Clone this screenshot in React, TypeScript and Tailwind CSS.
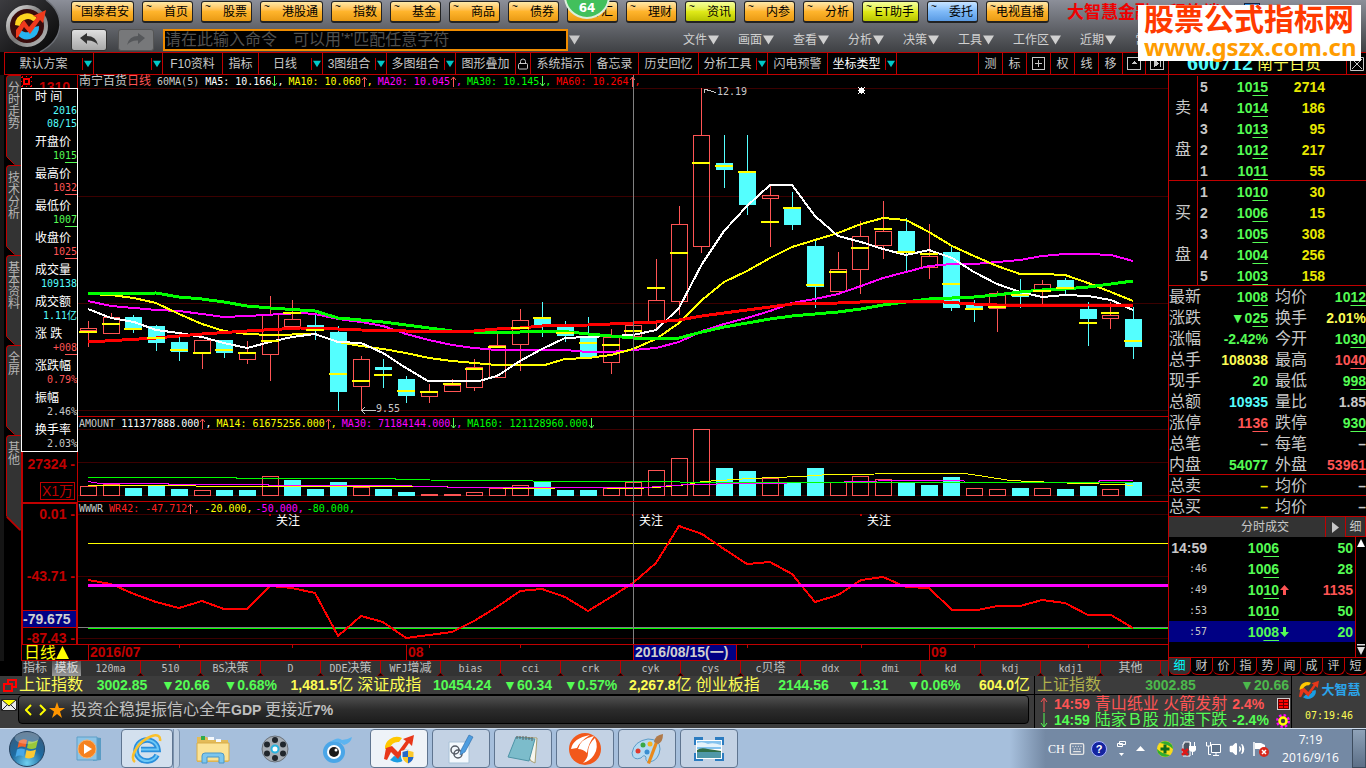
import React from 'react';
import { Keyboard, Lock, Volume2 } from 'lucide-react';

type Candle = [kind: 'u' | 'd', high: number, top: number, bottom: number, low: number, mark: number];

const START_X = 88;
const STEP_X = 22.72;
const CHART_LEFT = 78;
const CHART_WIDTH = 1090;

const barX = (i: number) => Math.round(START_X + i * STEP_X);
const leftPercent = (x: number) => `${((x - CHART_LEFT) / CHART_WIDTH) * 100}%`;

const candles: Candle[] = [
  ['u', 321, 328, 330, 347, 331], ['u', 313, 317, 333, 333, 323], ['d', 315, 317, 330, 333, 328],
  ['d', 325, 326, 343, 351, 337], ['d', 335, 342, 352, 361, 349], ['u', 340, 340, 353, 369, 352],
  ['d', 340, 340, 353, 358, 349], ['u', 341, 353, 359, 364, 352], ['u', 296, 314, 354, 381, 340],
  ['u', 300, 319, 326, 330, 312], ['d', 315, 325, 327, 340, 329], ['d', 326, 332, 392, 411, 373],
  ['u', 356, 359, 386, 411, 380], ['d', 359, 367, 370, 388, 374], ['d', 376, 379, 396, 403, 390],
  ['u', 384, 391, 396, 403, 391], ['u', 379, 385, 391, 391, 383], ['u', 359, 367, 387, 391, 368],
  ['u', 333, 345, 377, 377, 346], ['u', 309, 320, 344, 371, 327], ['d', 302, 317, 325, 337, 317],
  ['d', 321, 327, 336, 342, 332], ['d', 317, 336, 358, 358, 342], ['u', 329, 337, 362, 374, 344],
  ['u', 325, 325, 336, 336, 330], ['u', 259, 300, 321, 330, 287], ['u', 206, 224, 301, 315, 252],
  ['u', 88, 135, 246, 253, 162], ['d', 135, 163, 170, 188, 165], ['d', 135, 172, 205, 215, 171],
  ['u', 186, 195, 198, 247, 221], ['d', 192, 207, 225, 230, 207], ['d', 241, 246, 287, 308, 284],
  ['u', 252, 269, 291, 291, 271], ['u', 221, 236, 269, 294, 247], ['u', 201, 231, 245, 259, 228],
  ['d', 218, 231, 253, 271, 251], ['u', 224, 256, 267, 279, 253], ['d', 247, 252, 308, 311, 283],
  ['d', 300, 305, 310, 322, 308], ['u', 291, 293, 308, 332, 306], ['d', 279, 293, 297, 308, 294],
  ['u', 280, 284, 289, 304, 290], ['d', 278, 280, 289, 294, 287], ['d', 302, 309, 319, 346, 322],
  ['u', 302, 315, 318, 329, 312], ['d', 307, 319, 347, 359, 340],
];

// top edge of each turnover bar; all of them stand on y = 496
const volumes = [
  486, 484, 488, 486, 489, 490, 490, 490, 476, 480, 489, 482, 487, 489, 492, 494, 494, 492, 488, 485, 482, 490,
  490, 488, 482, 470, 458, 429, 468, 471, 478, 483, 468, 482, 476, 479, 483, 485, 477, 488, 489, 488, 488, 489,
  486, 489, 482,
];
const volumeKinds = 'uuddduddudd' + 'duddu' + 'uuuu' + 'ddduuuuu' + 'ddudd' + 'uuudddu' + 'ududdud';

const averages = [
  {
    color: '#ff00ff', width: 2,
    points: '88,301 111,306 134,308 156,310 179,311 202,314 224,317 247,316 300,313 315,314 338,319 361,322 383,326 406,334 429,340 452,345 474,348 497,350 565,350 588,352 611,352 633,350 656,348 679,342 702,331 724,324 747,318 770,311 792,303 815,299 838,294 861,286 883,278 906,272 929,266 952,264 974,264 997,262 1020,260 1042,256 1065,254 1088,254 1111,255 1133,261',
  },
  {
    color: '#ffff00', width: 2,
    points: '88,294 111,295 134,298 156,303 179,314 202,324 224,331 247,334 270,335 315,334 338,342 361,346 383,349 406,353 429,358 452,361 474,363 497,365 545,365 565,359 588,358 611,355 633,349 656,339 679,323 702,300 724,282 747,271 770,258 792,247 815,240 838,233 861,224 883,218 906,220 929,232 952,246 974,256 997,266 1020,274 1042,274 1065,275 1088,283 1111,292 1133,301',
  },
  {
    color: '#ffffff', width: 2,
    points: '88,309 111,318 134,322 156,330 179,333 202,337 224,343 247,348 270,342 292,337 315,334 338,342 361,343 383,353 406,368 428,381 479,381 497,376 520,361 542,349 565,338 588,337 633,335 656,330 679,308 702,264 724,231 747,206 770,185 792,185 815,216 838,236 861,242 883,249 906,255 929,250 952,258 974,272 997,284 1020,292 1042,297 1065,295 1088,296 1111,300 1133,310',
  },
  {
    color: '#00ff00', width: 3,
    points: '88,294 156,293 179,297 202,299 224,302 247,306 270,308 300,310 315,311 338,318 361,320 383,322 406,325 429,328 452,331 474,332 520,332 542,331 560,331 588,334 611,336 633,338 656,339 679,338 702,332 724,327 747,323 770,319 792,316 815,314 838,312 861,309 883,305 906,302 929,299 952,298 974,297 997,295 1020,292 1042,290 1065,289 1088,287 1111,284 1133,281',
  },
  {
    color: '#ff0000', width: 3,
    points: '88,342 156,338 202,334 247,331 300,328 338,329 361,330 406,331 474,331 497,329 520,328 542,326 588,325 633,323 656,322 679,320 702,316 724,313 747,310 770,307 792,304 838,303 883,301 929,301 974,304 997,305 1088,305 1133,306',
  },
];

const turnoverAverages = [
  {
    color: '#ffff00',
    points: '88,485.5 300,486.5 420,486.5 530,488.5 580,487.5 633,488.5 656,487.5 688,484.5 702,481.5 720,480.5 750,478.5 800,476.5 830,474.5 920,473.5 965,473.5 985,476.5 1010,480.5 1032,481.5 1078,483.5 1120,484.5 1133,485.5',
  },
  {
    color: '#ff00ff',
    points: '88,481.5 100,483.5 168,483.5 169,484.5 236,484.5 300,485.5 395,485.5 464,487.5 645,487.5 688,484.5 747,483.5 827,482.5 895,480.5 963,480.5 966,482.5 1098,482.5 1100,480.5 1133,480.5',
  },
  {
    color: '#00ff00',
    points: '88,477.5 236,477.5 237,478.5 395,478.5 396,479.5 464,480.5 600,481.5 760,482.5 1133,482.5',
  },
];

const wrPoints =
  '88,580 111,584 134,594 156,602 179,608 202,601 224,609 247,609 270,586 292,588 315,593 338,636 361,616 383,622 406,638 429,635 452,632 474,621 497,607 520,591 542,589 565,597 588,611 611,597 633,583 656,563 679,526 702,534 724,549 747,564 770,562 792,574 815,602 838,595 861,580 883,577 906,587 929,588 952,610 978,610 997,606 1020,606 1042,600 1065,603 1088,615 1111,615 1133,628';

const GOLD = 'from-[#ffe9a8] via-[#ffb52c] to-[#e99a12]';
const LIME = 'from-[#f6ff9a] via-[#e0ea18] to-[#b8c400]';
const SKY = 'from-[#c8e4ff] via-[#7fbaf8] to-[#5a9be4]';

const shortcuts = [
  { label: '国泰君安', w: 'w-[63px]', tone: GOLD },
  { label: '首页', w: 'w-[51px]', tone: GOLD },
  { label: '股票', w: 'w-[51px]', tone: GOLD },
  { label: '港股通', w: 'w-[63px]', tone: GOLD },
  { label: '指数', w: 'w-[51px]', tone: GOLD },
  { label: '基金', w: 'w-[51px]', tone: GOLD },
  { label: '商品', w: 'w-[51px]', tone: GOLD },
  { label: '债券', w: 'w-[51px]', tone: GOLD },
  { label: '外汇', w: 'w-[51px]', tone: GOLD },
  { label: '理财', w: 'w-[51px]', tone: GOLD },
  { label: '资讯', w: 'w-[51px]', tone: LIME },
  { label: '内参', w: 'w-[51px]', tone: GOLD },
  { label: '分析', w: 'w-[51px]', tone: GOLD },
  { label: 'ET助手', w: 'w-[57px]', tone: LIME },
  { label: '委托', w: 'w-[51px]', tone: SKY },
  { label: '电视直播', w: 'w-[63px]', tone: GOLD },
];

const menus = ['文件', '画面', '查看', '分析', '决策', '工具', '工作区', '近期', '常用'];

const tools = [
  { label: '默认方案', w: 'w-[89px]', drop: true },
  { label: '', w: 'w-[69px]', drop: true },
  { label: 'F10资料', w: 'w-[60px]' },
  { label: '指标', w: 'w-[36px]' },
  { label: '日线', w: 'w-[64px]', drop: true },
  { label: '3图组合', w: 'w-[64px]', drop: true },
  { label: '多图组合', w: 'w-[69px]', drop: true },
  { label: '图形叠加', w: 'w-[60px]' },
  { label: 'lock', w: 'w-[15px]' },
  { label: '系统指示', w: 'w-[60px]' },
  { label: '备忘录', w: 'w-[48px]' },
  { label: '历史回忆', w: 'w-[60px]' },
  { label: '分析工具', w: 'w-[69px]', drop: true },
  { label: '闪电预警', w: 'w-[60px]' },
  { label: '坐标类型', w: 'w-[69px]', drop: true, active: true },
];

const sideTabs = ['分时走势', '技术分析', '基本资料', '全屏', '其他'];

const templates = [
  '120ma', '510', 'BS决策', 'D', 'DDE决策', 'WFJ增减', 'bias', 'cci', 'crk', 'cyk', 'cys', 'c贝塔', 'ddx', 'dmi',
  'kd', 'kdj', 'kdj1', '其他',
];

const G = 'text-[#54fc54]';
const R = 'text-[#ff5454]';
const Y = 'text-[#fcfc54]';
const C = 'text-[#54fcfc]';
const W = 'text-[#c8c8c8]';

const dayInfo = [
  { label: '时 间', values: ['2016', '08/15'], color: C },
  { label: '开盘价', values: ['1015'], color: G, price: true },
  { label: '最高价', values: ['1032'], color: R, price: true },
  { label: '最低价', values: ['1007'], color: G, price: true },
  { label: '收盘价', values: ['1025'], color: R, price: true },
  { label: '成交量', values: ['109138'], color: C },
  { label: '成交额', values: ['1.11亿'], color: C },
  { label: '涨 跌', values: ['+008'], color: R, price: true },
  { label: '涨跌幅', values: ['0.79%'], color: R },
  { label: '振幅', values: ['2.46%'], color: W },
  { label: '换手率', values: ['2.03%'], color: W },
];

const asks = [['5', '1015', '2714'], ['4', '1014', '186'], ['3', '1013', '95'], ['2', '1012', '217'], ['1', '1011', '55']];
const bids = [['1', '1010', '30'], ['2', '1006', '15'], ['3', '1005', '308'], ['4', '1004', '256'], ['5', '1003', '158']];

type Stat = [string, string, string, string, string, string];
const stats: Stat[] = [
  ['最新', '_1008', G, '均价', '_1012', G],
  ['涨跌', '▼_025', G, '换手', '2.01%', Y],
  ['涨幅', '-2.42%', G, '今开', '_1030', G],
  ['总手', '108038', Y, '最高', '_1040', R],
  ['现手', '20', G, '最低', '_998', G],
  ['总额', '10935', C, '量比', '1.85', W],
  ['涨停', '_1136', R, '跌停', '_930', G],
  ['总笔', '–', W, '每笔', '–', W],
  ['内盘', '54077', G, '外盘', '53961', R],
  ['总卖', '–', 'text-[#e8e800]', '均价', '–', W],
  ['总买', '–', 'text-[#e8e800]', '均价', '–', W],
];

const trades = [
  { time: '14:59', price: '1006', arrow: '', vol: '50', color: G },
  { time: ':46', price: '1006', arrow: '', vol: '28', color: G },
  { time: ':49', price: '1010', arrow: 'up', vol: '1135', color: R },
  { time: ':53', price: '1010', arrow: '', vol: '50', color: G },
  { time: ':57', price: '1008', arrow: 'down', vol: '20', color: G },
];

const quoteTabs = ['细', '财', '价', '指', '势', '闻', '成', '评', '短'];

const indices = [
  { name: '上证指数', price: '3002.85', change: '▼20.66', percent: '▼0.68%', amount: '1,481.5亿' },
  { name: '深证成指', price: '10454.24', change: '▼60.34', percent: '▼0.57%', amount: '2,267.8亿' },
  { name: '创业板指', price: '2144.56', change: '▼1.31', percent: '▼0.06%', amount: '604.0亿' },
];

const mono = "font-['DejaVu_Sans_Mono','Noto_Sans_CJK_SC',monospace] text-[10px]";

// The last two digits of a price (after an optional "_" marker) are underlined
const Price = ({ value }: { value: string }) => {
  if (!value.includes('_')) return <>{value}</>;
  const text = value.replace('_', '');
  return (
    <>
      {text.slice(0, -2)}
      <span className="underline decoration-1 underline-offset-3">{text.slice(-2)}</span>
    </>
  );
};

const DownTriangle = ({ className }: { className: string }) => (
  <svg viewBox="0 0 12 10" className={className}>
    <path d="M0 0H12L6 10Z" fill="currentColor" />
  </svg>
);

const AppLogo = () => (
  <svg viewBox="0 0 60 52" className="h-[52px] w-[60px] shrink-0">
    <defs>
      <linearGradient id="ring" x1="0" y1="0" x2="1" y2="1">
        <stop offset="0" stopColor="#e8e8e8" />
        <stop offset="0.5" stopColor="#777" />
        <stop offset="1" stopColor="#bdbdbd" />
      </linearGradient>
      <linearGradient id="corner" x1="0" y1="0" x2="1" y2="1">
        <stop offset="0" stopColor="#3c3c40" />
        <stop offset="1" stopColor="#050505" />
      </linearGradient>
    </defs>
    <path d="M0 0H46Q60 10 60 25Q59 42 40 52H0Z" fill="url(#corner)" />
    <path d="M46 0Q60 10 60 25Q59 42 40 52" fill="none" stroke="#6d7077" strokeWidth="1.5" />
    <circle cx="27" cy="26" r="19" fill="#3a0c0c" stroke="url(#ring)" strokeWidth="4" />
    <path d="M15 25A12 11 0 0 1 38 20L33 21A8 8 0 0 0 20 26Z" fill="#ffd21f" />
    <path d="M39 26A12 12 0 0 1 16 32L21 30A8 8 0 0 0 34 27Z" fill="#27b4f0" />
    <path d="M16 38L16 30L24 20L29 27L37 17L33 16L46 10L43 23L40 20L30 34L24 27L18 37Z" fill="#ef3a1c" />
  </svg>
);

const HistoryArrow = ({ className, flip }: { className: string; flip?: boolean }) => (
  <svg viewBox="0 0 20 14" className={`h-[14px] w-5 ${className}`}>
    <path
      d={flip ? 'M19 5L12 0V3Q3 3 1 12Q5 7 12 7.500V11Z' : 'M1 5L8 0V3Q17 3 19 12Q15 7 8 7.500V11Z'}
      fill="currentColor"
    />
  </svg>
);

const Header = () => (
  <header className="relative flex h-[52px] shrink-0 bg-linear-to-b from-[#8c8f99] to-[#3f4144]">
    <AppLogo />
    <div className="flex min-w-0 flex-1 flex-col pl-[11px]">
      <nav className="flex gap-2 pt-px text-xs">
        {shortcuts.map((item) => (
          <button
            key={item.label}
            className={`relative flex h-[22px] shrink-0 items-center justify-end rounded-[3px] border border-b-2 border-[#222] bg-linear-to-b pr-1 leading-3 text-black ${item.w} ${item.tone}`}
          >
            <span className="absolute top-0 left-[3px] text-[10px] leading-[10px]">~</span>
            {item.label}
          </button>
        ))}
        <span className="ml-2.5 text-[17px] leading-6 font-bold whitespace-nowrap text-[#f00000]">
          大智慧金融工程终端
        </span>
        <span className="mt-0.5 ml-4 h-3 w-4 border border-[#124] bg-[#2f8fe0]" />
      </nav>
      <div className="flex items-center pt-1">
        <button
          aria-label="后退"
          className="flex h-[22px] w-9 items-center justify-center rounded-[3px] border border-[#333] bg-linear-to-b from-[#e0e0e0] to-[#a8a8a8]"
        >
          <HistoryArrow className="text-[#333]" />
        </button>
        <button
          aria-label="前进"
          className="ml-[11px] flex h-[22px] w-9 items-center justify-center rounded-[3px] border border-[#555] bg-[#77787a]"
        >
          <HistoryArrow className="text-[#55575a]" flip />
        </button>
        <input
          aria-label="命令"
          placeholder="请在此输入命令　可以用'*'匹配任意字符"
          className="ml-[9px] h-[22px] w-[405px] border-2 border-[#f08c00] bg-black text-base leading-4 text-white outline-none placeholder:text-[#505050]"
        />
        <DownTriangle className="ml-px h-2.5 w-[11px] text-[#c8c8c8]" />
        <nav className="ml-[103px] flex gap-[19px] text-xs leading-4 text-[#d0d0d0]">
          {menus.map((label) => (
            <button key={label} className="flex shrink-0 items-center">
              {label}
              <DownTriangle className="ml-px h-2.5 w-[11px]" />
            </button>
          ))}
        </nav>
      </div>
    </div>

    {/* download speed ball, half hidden behind the top edge */}
    <div className="absolute -top-[27px] left-[564px] flex h-[46px] w-[46px] items-end justify-center rounded-full border-2 border-[#dcefdc] bg-[#42c05c] pb-px font-['DejaVu_Sans'] text-xs leading-4 font-bold text-white">
      64
    </div>
    <div className="absolute top-[5px] right-[5px] z-20 w-[223px] bg-white pb-0.5 pl-[6px]">
      <p className="text-[30px] leading-[30px] font-bold whitespace-nowrap text-[#ff3a00]">股票公式指标网</p>
      <p className="font-['Noto_Sans',sans-serif] text-2xl leading-6 font-bold text-[#ff9c00]">www.gszx.com.cn</p>
    </div>
  </header>
);

const PlusBox = () => (
  <svg viewBox="0 0 13 13" className="h-[13px] w-[13px]" fill="none" stroke="#c8c8c8" shapeRendering="crispEdges">
    <path d="M0.500 0.500H12.500V12.500H0.500ZM6.500 3V10M3 6.500H10" />
  </svg>
);

const Toolbar = () => (
  <div className="ml-1 flex h-[23px] border-y border-l border-[#c00000] text-xs text-[#c8c8c8]">
    {tools.map((tool, i) => (
      <button key={i} className={`flex shrink-0 items-center border-r border-[#c00000] ${tool.w}`}>
        <span className={`flex-1 text-center whitespace-nowrap ${tool.active ? 'text-white' : ''}`}>
          {tool.label === 'lock' ? <Lock className="mx-auto h-3.5 w-3" /> : tool.label}
        </span>
        {tool.drop && (
          <span className="flex h-3 w-[11px] items-center justify-center border-l border-[#c00000]">
            <DownTriangle className="h-2 w-2 text-[#00c8c8]" />
          </span>
        )}
      </button>
    ))}
    <div className="flex flex-1 justify-end">
      {['测', '标', '+', '权', '线', '移', 'up', 'next'].map((label) => (
        <button
          key={label}
          aria-label={label}
          className={`flex items-center justify-center border-l border-[#c00000] ${label.length > 1 ? 'w-[23px]' : 'w-6'}`}
        >
          {label === '+' && <PlusBox />}
          {label === 'up' && (
            <svg viewBox="0 0 14 13" className="h-[13px] w-[14px]" stroke="#c8c8c8" fill="none" shapeRendering="crispEdges">
              <path d="M0.500 0.500H13.500V12.500H0.500Z" />
              <path d="M4 7H10L7 4Z" fill="#c8c8c8" stroke="none" />
            </svg>
          )}
          {label === 'next' && (
            <svg viewBox="0 0 14 13" className="h-[13px] w-[14px]" stroke="#c8c8c8" fill="none" shapeRendering="crispEdges">
              <path d="M0.500 0.500H13.500V12.500H0.500ZM10.500 3V10" />
              <path d="M4 2.500V10.500L9 6.500Z" fill="#c8c8c8" stroke="none" />
            </svg>
          )}
          {label.length === 1 && label !== '+' && label}
        </button>
      ))}
    </div>
  </div>
);

const SideTabs = () => (
  <div className="flex w-[21px] shrink-0 flex-col border-l-4 border-[#151515] pl-0.5">
    {sideTabs.map((label, i) => {
      const last = i === sideTabs.length - 1;
      return (
        <button
          key={label}
          className={`relative flex items-start rounded-tl-sm border-t border-l border-[#c00000] bg-[#333] pt-1.5 pl-px ${
            last ? 'h-24' : 'h-[90px]'
          }`}
        >
          <span className="w-3 text-xs leading-3 break-all text-[#b4b4b4]">{label}</span>
          <svg
            viewBox="0 0 9 9"
            className={`absolute bottom-0 -left-px ${last ? 'h-[15px] w-[15px]' : 'h-[9px] w-[9px]'}`}
          >
            <path d="M0 0V9H9Z" fill="#000" />
            <path d="M0.500 0.500L8.500 8.500" stroke="#c00000" />
          </svg>
        </button>
      );
    })}
  </div>
);

const Axis = () => (
  <div className="relative flex w-[57px] shrink-0 flex-col text-sm leading-4 font-bold text-[#c00000]">
    <div className="flex min-h-[342px] flex-1 items-start border-r border-[#c00000]">
      <svg viewBox="0 0 11 11" className="mt-px h-[11px] w-[11px]" fill="none" stroke="#f00" shapeRendering="crispEdges">
        <path d="M3 3H8V8H3Z" strokeWidth="2" />
        <path d="M1 0V2M0 1H2M5.500 0V1M10 0V2M9 1H11M1 9V11M0 10H2M5.500 10V11M10 9V11M9 10H11M0 5.500H1M10 5.500H11" />
      </svg>
      <span className="h-[13px] overflow-hidden pt-1 pl-[7px]">1310</span>
    </div>
    <div className="flex h-[85px] flex-col items-end justify-end border-r border-l-2 border-[#c00000] pb-0.5">
      <span className="pr-0.5">27324 -</span>
      <span className="mt-2.5 mr-0.5 border border-[#c00000] px-px leading-4 font-normal">X1万</span>
    </div>
    <div className="relative flex h-[143px] flex-col items-end justify-between border-2 border-b border-[#c00000]">
      <span className="mt-0.5 pr-px">0.01 -</span>
      <span className="mt-[46px] pr-px">-43.71 -</span>
      <div className="w-full">
        <div className="mt-[26px] w-full border-y border-[#c00000] bg-[#000084] text-[#d0d0d0]">-79.675</div>
        <div className="h-4 overflow-hidden pr-px text-right leading-5">-87.43 -</div>
      </div>
    </div>
    <button className="flex h-4 items-center border-b border-l border-[#c00000] pl-0.5 text-base leading-[14px] font-normal text-[#ffff00]">
      日线
      <svg viewBox="0 0 13 13" className="h-[13px] w-[13px]">
        <path d="M6.500 0L13 13H0Z" fill="currentColor" />
      </svg>
    </button>

    {/* values of the day under the crosshair, floats over the axis */}
    <dl className="absolute top-[13px] left-0 z-10 flex w-[57px] flex-col gap-[5px] border border-white bg-black pt-px pb-px font-normal">
      {dayInfo.map((row) => (
        <div key={row.label}>
          <dt className="pl-[13px] text-xs leading-[14px] whitespace-pre text-white">{row.label}</dt>
          {row.values.map((value) => (
            <dd key={value} className={`text-right leading-[13px] ${mono} ${row.color}`}>
              <Price value={row.price ? `_${value}` : value} />
            </dd>
          ))}
        </div>
      ))}
    </dl>
  </div>
);

type LegendItem = { text: string; color: string; trend?: 'up' | 'down' };

const TrendArrow = ({ trend }: { trend: 'up' | 'down' }) => (
  <svg
    viewBox="0 0 6 12"
    className={`mt-px inline-block h-3 w-1.5 align-top ${trend === 'up' ? R : G}`}
    fill="none"
    stroke="currentColor"
  >
    <path d={trend === 'up' ? 'M3.500 11V1M1 4L3.500 1L6 4' : 'M3.500 0V10M1 7L3.500 10L6 7'} />
  </svg>
);

const Legend = ({ items }: { items: LegendItem[] }) => (
  <>
    {items.map((item) => (
      <span key={item.text} className={`${item.trend ? 'mr-[5px]' : 'mr-[3px]'} ${item.color}`}>
        {item.text}
        {item.trend && <TrendArrow trend={item.trend} />},
      </span>
    ))}
  </>
);

const GridLines = ({ ys }: { ys: number[] }) => (
  <g fill="#3c0000">
    {ys.map((y) => (
      <rect key={y} x={CHART_LEFT} y={y} width={CHART_WIDTH} height="1" />
    ))}
  </g>
);

const PriceChart = () => (
  <div className="relative min-h-[342px] flex-1 border-b border-[#c00000]">
    <svg
      viewBox="78 75 1090 341"
      preserveAspectRatio="none"
      className="absolute inset-0 h-full w-full"
      shapeRendering="crispEdges"
    >
      <GridLines ys={[88, 196, 303, 410]} />
      {candles.map(([kind, high, top, bottom, low], i) => {
        const x = barX(i);
        return kind === 'd' ? (
          <g key={i} fill="#54ffff">
            <rect x={x} y={high} width="1" height={low - high} />
            <rect x={x - 8} y={top} width="17" height={bottom - top} />
          </g>
        ) : (
          <g key={i} fill="#ff5454">
            <rect x={x} y={high} width="1" height={top - high} />
            <rect x={x} y={bottom} width="1" height={low - bottom} />
            <rect x={x - 7.5} y={top + 0.5} width="16" height={bottom - top} fill="none" stroke="#ff5454" />
          </g>
        );
      })}
      {averages.map((line) => (
        <polyline key={line.color} points={line.points} fill="none" stroke={line.color} strokeWidth={line.width} />
      ))}
      {candles.map((candle, i) => (
        <rect key={i} x={barX(i) - 9} y={candle[5]} width="18" height="2" fill="#ffff00" />
      ))}
      <path d="M704 93V89L708 90M704 89L716 92.500M361 410.500H376M365 407L361.500 410.500L365 414" fill="none" stroke="#c8c8c8" />
      <path
        d="M859 88H864V93H859ZM858 87H859V88H858ZM861 87H862V88H861ZM864 87H865V88H864ZM858 90H859V91H858ZM864 90H865V91H864ZM858 93H859V94H858ZM861 93H862V94H861ZM864 93H865V94H864Z"
        fill="#fff"
      />
      <rect x="633" y="75" width="1" height="341" fill="#808080" />
    </svg>
    <div className={`relative flex items-start leading-[13px] whitespace-pre ${mono}`}>
      <span className="pl-px text-xs leading-[13px] text-[#c8c8c8]">南宁百货</span>
      <span className={`mr-1.5 text-xs leading-[13px] ${R}`}>日线</span>
      <span className="mr-1.5 text-[#c8c8c8]">60MA(5)</span>
      <Legend
        items={[
          { text: 'MA5: 10.166', color: 'text-white', trend: 'down' },
          { text: 'MA10: 10.060', color: 'text-[#ffff00]', trend: 'up' },
          { text: 'MA20: 10.045', color: 'text-[#ff00ff]', trend: 'up' },
          { text: 'MA30: 10.145', color: 'text-[#00ff00]', trend: 'down' },
          { text: 'MA60: 10.264', color: 'text-[#ff0000]', trend: 'up' },
        ]}
      />
    </div>
    <span className={`absolute top-[11px] leading-3 text-[#c8c8c8] ${mono}`} style={{ left: leftPercent(717) }}>
      12.19
    </span>
    <span className={`absolute bottom-px leading-3 text-[#c8c8c8] ${mono}`} style={{ left: leftPercent(376) }}>
      9.55
    </span>
  </div>
);

const TurnoverChart = () => (
  <div className="relative h-[85px] border-b border-[#c00000]">
    <svg
      viewBox="78 417 1090 84"
      preserveAspectRatio="none"
      className="absolute inset-0 h-full w-full"
      shapeRendering="crispEdges"
    >
      <GridLines ys={[429, 462, 495]} />
      {volumes.map((top, i) =>
        volumeKinds[i] === 'd' ? (
          <rect key={i} x={barX(i) - 8} y={top} width="17" height={496 - top} fill="#54ffff" />
        ) : (
          <rect key={i} x={barX(i) - 7.5} y={top + 0.5} width="16" height={495 - top} fill="none" stroke="#ff5454" />
        )
      )}
      {turnoverAverages.map((line) => (
        <polyline key={line.color} points={line.points} fill="none" stroke={line.color} />
      ))}
      <rect x="633" y="417" width="1" height="84" fill="#808080" />
    </svg>
    <div className={`relative flex items-start pl-px leading-[13px] whitespace-pre ${mono}`}>
      <span className="mr-1.5 text-[#c8c8c8]">AMOUNT</span>
      <Legend
        items={[
          { text: '111377888.000', color: 'text-white', trend: 'up' },
          { text: 'MA14: 61675256.000', color: 'text-[#ffff00]', trend: 'up' },
          { text: 'MA30: 71184144.000', color: 'text-[#ff00ff]', trend: 'down' },
        ]}
      />
      <span className="text-[#00ff00]">
        MA160: 121128960.000
        <TrendArrow trend="down" />
      </span>
    </div>
  </div>
);

const WrChart = () => (
  <div className="relative h-[143px] border-b border-[#c00000]">
    <svg
      viewBox="78 502 1090 142"
      preserveAspectRatio="none"
      className="absolute inset-0 h-full w-full"
      shapeRendering="crispEdges"
    >
      <GridLines ys={[514, 576, 638]} />
      <rect x="88" y="543" width="1080" height="1" fill="#ffff00" />
      <rect x="88" y="628" width="1080" height="1" fill="#00ff00" />
      <rect x="78" y="627" width="1090" height="1" fill="#808080" />
      <polyline points={wrPoints} fill="none" stroke="#ff0000" strokeWidth="2" />
      <rect x="88" y="584" width="1080" height="3" fill="#ff00ff" />
      <path d="M269 514H271V516H269ZM632 514H634V516H632ZM860 514H862V516H860Z" fill="#c00000" />
      <rect x="633" y="502" width="1" height="142" fill="#808080" />
    </svg>
    <div className={`relative flex items-start pl-px leading-[13px] whitespace-pre ${mono}`}>
      <span className="mr-1.5 text-[#c8c8c8]">WWWR</span>
      <Legend
        items={[
          { text: 'WR42: -47.712', color: 'text-[#ff2020]', trend: 'up' },
          { text: '-20.000', color: 'text-[#ffff00]' },
          { text: '-50.000', color: 'text-[#ff00ff]' },
          { text: '-80.000', color: 'text-[#00ff00]' },
        ]}
      />
    </div>
    {[276, 639, 867].map((x) => (
      <span key={x} className="absolute top-3 text-xs leading-[14px] text-white" style={{ left: leftPercent(x) }}>
        关注
      </span>
    ))}
  </div>
);

const DateAxis = () => (
  <div className="relative h-4 border-b border-[#c00000] text-sm leading-[15px] font-bold text-[#c00000]">
    {[179, 292, 429, 520, 747, 861, 974, 1088].map((x) => (
      <span key={x} className="absolute top-0 h-[3px] w-px bg-[#c00000]" style={{ left: leftPercent(x) }} />
    ))}
    {[{ x: 88, label: '2016/07' }, { x: 406, label: '08' }, { x: 929, label: '09' }].map(({ x, label }) => (
      <span key={x} className="absolute top-0 border-l border-[#c00000] pl-px" style={{ left: leftPercent(x) }}>
        {label}
      </span>
    ))}
    <span
      className="absolute top-0 h-[15px] w-[104px] overflow-hidden border-x border-[#c00000] bg-[#000084] pl-px whitespace-nowrap text-[#d0d0d0]"
      style={{ left: leftPercent(633) }}
    >
      2016/08/15(一)
    </span>
  </div>
);

const TemplateTabs = () => (
  <div className={`ml-[22px] flex h-[15px] bg-[#333] leading-[15px] text-[#c0c0c0] ${mono}`}>
    <button className="w-[30px] pr-1 text-xs leading-[15px]">指标</button>
    <button className="w-[29px] bg-linear-to-b from-[#555] to-[#999] text-xs leading-[15px] text-[#ddd]">模板</button>
    {templates.map((label) => (
      <button key={label} className="relative min-w-0 flex-1 border-r border-[#c00000] whitespace-nowrap">
        {label.split(/([\u4e00-\u9fff]+)/).map((part, i) => (
          <span key={i} className={i % 2 ? 'text-xs leading-[15px]' : ''}>
            {part}
          </span>
        ))}
        <svg viewBox="0 0 7 3" className="absolute -right-1 bottom-0 z-10 h-[3px] w-[7px]">
          <path d="M0 3L3.500 0L7 3Z" fill="#000" stroke="#c00000" strokeWidth="0.600" />
        </svg>
      </button>
    ))}
    <span className="w-[7px]" />
  </div>
);

const OrderBook = ({ side, rows }: { side: string; rows: string[][] }) => (
  <div className="flex h-[105px] shrink-0 shadow-[inset_0_-1px_#c00000]">
    <div className="flex w-[29px] flex-col items-center justify-center gap-[26px] border-r border-[#c00000] text-base leading-4">
      <span>{side}</span>
      <span>盘</span>
    </div>
    <table className="table-fixed border-collapse text-right text-sm leading-4 font-bold">
      <tbody>
        {rows.map(([level, price, volume]) => (
          <tr key={level} className="h-[21px]">
            <td className="w-[14px] p-0 pl-0.5 text-left">{level}</td>
            <td className={`w-[56px] p-0 ${G}`}>
              <Price value={`_${price}`} />
            </td>
            <td className="w-[57px] p-0 text-[#e8e800]">{volume}</td>
          </tr>
        ))}
      </tbody>
    </table>
  </div>
);

const QuotePanel = () => (
  <aside className="flex w-[198px] shrink-0 flex-col overflow-hidden border-l border-[#c00000] text-[#c8c8c8]">
    <div className="flex h-[23px] shrink-0 items-end border-y border-[#c00000] pl-[18px]">
      <span className="font-['Liberation_Serif'] text-[22px] leading-[22px] font-bold text-[#54fcfc]">600712</span>
      <span className="ml-1 flex-1 text-base leading-5 text-[#fcfc54]">南宁百货</span>
      <button aria-label="关闭" className="flex h-full w-5 items-center justify-center border-l border-[#c00000]">
        <svg viewBox="0 0 14 14" className="h-[14px] w-[14px]" fill="none" stroke="#c8c8c8">
          <path d="M0.500 0.500H13.500V13.500H0.500ZM2 2L12 12M12 2L2 12" />
        </svg>
      </button>
    </div>
    <div className="pt-px">
      <OrderBook side="卖" rows={asks} />
      <OrderBook side="买" rows={bids} />
    </div>
    <table className="w-full table-fixed border-collapse text-sm leading-4">
      <tbody>
        {stats.map(([label, value, color, label2, value2, color2], i) => (
          <tr key={label} className={i > 7 ? 'h-[21px] shadow-[inset_0_-1px_#c00000]' : 'h-[21px]'}>
            <th className="w-[36px] p-0 text-left text-base leading-4 font-normal">{label}</th>
            <td className={`w-[63px] p-0 text-right font-bold ${color}`}>
              <Price value={value} />
            </td>
            <th className="w-[40px] p-0 pl-[7px] text-left text-base leading-4 font-normal">{label2}</th>
            <td className={`w-[58px] p-0 text-right font-bold ${color2}`}>
              <Price value={value2} />
            </td>
          </tr>
        ))}
      </tbody>
    </table>
    <div className="flex h-5 shrink-0 bg-[#333] text-xs">
      <span className="flex-1 pl-9 text-center leading-5">分时成交</span>
      <button aria-label="更多" className="flex w-5 items-center justify-center border-l border-[#c00000]">
        <svg viewBox="0 0 7 11" className="h-[11px] w-[7px]">
          <path d="M0 0L7 5.500L0 11Z" fill="#c8c8c8" />
        </svg>
      </button>
      <button className="w-[21px] border border-t-0 border-[#c00000]">细</button>
    </div>
    <div className="flex flex-1">
      <div className="flex-1">
        <table className="w-full table-fixed border-collapse text-right text-sm leading-4 font-bold">
          <tbody>
            {trades.map((row, i) => (
              <tr key={i} className={i === 4 ? 'h-[21px] bg-[#000084]' : 'h-[21px]'}>
                <td className={i ? `w-[38px] p-0 font-normal ${mono}` : 'w-[38px] p-0'}>{row.time}</td>
                <td className={`w-[72px] p-0 ${G}`}>
                  <Price value={`_${row.price}`} />
                </td>
                <td className={`w-[11px] p-0 ${row.arrow === 'up' ? R : G}`}>
                  {row.arrow && (
                    <svg viewBox="0 0 9 10" className="mx-auto h-2.5 w-[9px]" fill="currentColor">
                      <path d={row.arrow === 'up' ? 'M4.500 0L9 5H6V10H3V5H0Z' : 'M4.500 10L0 5H3V0H6V5H9Z'} />
                    </svg>
                  )}
                </td>
                <td className={`p-0 pr-0.5 ${row.color}`}>{row.vol}</td>
              </tr>
            ))}
          </tbody>
        </table>
      </div>
      <div className="flex w-[11px] flex-col items-center justify-between border-l border-[#c00000] py-0.5">
        <svg viewBox="0 0 8 8" className="h-2 w-2">
          <path d="M0 8L4 0L8 8Z" fill="#fff" />
        </svg>
        <svg viewBox="0 0 8 11" className="h-[11px] w-2">
          <path d="M0 0H8V1.500H0ZM0 3H8L4 11Z" fill="#e0e0e0" />
        </svg>
      </div>
    </div>
    <div className="flex h-[19px] shrink-0 border-t border-[#c00000] text-xs leading-[17px]">
      {quoteTabs.map((label, i) => (
        <button
          key={label}
          className={`h-[17px] w-[22px] shrink-0 rounded-b-md border-r border-b border-[#c00000] ${i ? '' : 'bg-[#333] text-[#00ffff]'}`}
        >
          {label}
        </button>
      ))}
    </div>
  </aside>
);

const BrandMark = ({ className }: { className: string }) => (
  <svg viewBox="0 0 32 30" className={className}>
    <path d="M2 15A12 11 0 0 1 19 4L16 8A8 7 0 0 0 7 15Z" fill="#ffc800" />
    <path d="M26 15A12 11 0 0 1 7 26L11 22A8 7 0 0 0 21 16Z" fill="#1b9de2" />
    <path d="M1 25L3 14L9 12L15 18L23 7L20 5L31 1L29 12L26 9L15 25L8 18L4 26Z" fill="#e8371a" />
  </svg>
);

const Ticker = () => (
  <section className="flex h-[52px] shrink-0 bg-[#3c3c3c] text-sm font-bold">
    <div className="flex min-w-0 flex-1 flex-col border-r border-black">
      <div className="flex h-[19px] items-center border-b border-black pl-[3px] leading-[18px]">
        <svg viewBox="0 0 14 13" className="mr-0.5 h-[13px] w-[14px] shrink-0" fill="#3c3c3c" stroke="#f00" strokeWidth="2">
          <path d="M5 1H13V8H5Z" />
          <path d="M1 5H9V12H1Z" />
        </svg>
        {indices.map((index) => (
          <div key={index.name} className="flex flex-1 items-center justify-between pr-1 whitespace-nowrap">
            <span className={`text-base leading-[18px] font-normal ${Y}`}>{index.name}</span>
            <span className={G}>{index.price}</span>
            <span className={G}>{index.change}</span>
            <span className={G}>{index.percent}</span>
            <span className={Y}>
              {index.amount.slice(0, -1)}
              <span className="text-base leading-[18px] font-normal">亿</span>
            </span>
          </div>
        ))}
      </div>
      <div className="flex">
        <svg viewBox="0 0 16 12" className="mx-px mt-1 h-3 w-4" stroke="#222">
          <path d="M0.500 0.500H15.500V11.500H0.500Z" fill="#e8e8e8" />
          <path d="M0.500 0.500H15.500L8 7Z" fill="#ffff00" />
          <path d="M0.500 11.500L6 6M15.500 11.500L10 6" />
        </svg>
        <div className="mr-[5px] flex h-[29px] flex-1 items-center rounded-sm border border-black bg-linear-to-b from-[#505050] via-[#2c2c2c] to-[#1c1c1c] pl-1.5 leading-4 text-[#c0c0c0]">
          <svg viewBox="0 0 22 12" className="h-3 w-[22px]" fill="none" stroke="#ffff00" strokeWidth="2">
            <path d="M6 1L1 6L6 11M15 1L20 6L15 11" />
          </svg>
          <svg viewBox="0 0 16 16" className="mr-1.5 ml-0.5 h-4 w-4">
            <path d="M8 0L10 6H16L11 9.500L13 16L8 12L3 16L5 9.500L0 6H6Z" fill="#ff9600" />
          </svg>
          <a href="#news" className="whitespace-pre">
            <span className="text-base leading-4 font-normal">投资企稳提振信心全年</span>GDP{' '}
            <span className="text-base leading-4 font-normal">更接近</span>7%
          </a>
        </div>
      </div>
    </div>

    <div className="w-[257px] shrink-0 border-r border-black">
      <div className="flex h-[19px] items-center justify-between border-b border-black pr-0.5 pl-0.5 leading-[18px] text-[#4cb84c]">
        <span className="text-base leading-[18px] font-normal text-[#b0b04c]">上证指数</span>
        <span>3002.85</span>
        <span>▼20.66</span>
      </div>
      <div className="flex pt-px pl-[5px] whitespace-nowrap">
        <ul className="flex-1">
          <li className={`flex h-4 items-center gap-[5px] leading-4 ${R}`}>
            <svg viewBox="0 0 8 15" className="mr-px h-[15px] w-2" fill="none" stroke="currentColor">
              <path d="M4 15V1M1 5L4 1L7 5" />
            </svg>
            14:59<span className="text-base leading-4 font-normal">青山纸业 火箭发射</span>2.4%
          </li>
          <li className={`flex h-4 items-center gap-[5px] leading-4 ${G}`}>
            <svg viewBox="0 0 8 15" className="mr-px h-[15px] w-2" fill="none" stroke="currentColor">
              <path d="M4 0V14M1 10L4 14L7 10" />
            </svg>
            14:59<span className="text-base leading-4 font-normal">陆家Ｂ股 加速下跌</span>-2.4%
          </li>
        </ul>
        <div className="flex w-4 flex-col items-center gap-1 pt-0.5">
          <svg viewBox="0 0 13 12" className="h-3 w-[13px]">
            <path d="M0 0H13V12H0Z" fill="#ccc" />
            <path d="M1 1H12V11H1Z" fill="#600" />
            <path d="M2 2H6V4H2ZM7 2H11V4H7ZM2 5H6V7H2ZM7 5H11V7H7ZM2 8H6V10H2ZM7 8H11V10H7Z" fill="#f00" />
          </svg>
          <svg viewBox="0 0 14 14" className="h-[14px] w-[14px]" fill="none">
            <circle cx="7" cy="7" r="5.500" stroke="#f0f" strokeWidth="3" strokeDasharray="2.300 2" />
            <circle cx="7" cy="7" r="3.500" stroke="#ffff00" strokeWidth="2.500" />
          </svg>
        </div>
      </div>
    </div>

    <div className="flex w-[74px] shrink-0 flex-col items-center pt-1">
      <div className="flex items-center">
        <BrandMark className="h-5 w-6" />
        <span className="text-[13px] leading-5 font-bold text-[#2ba4ea]">大智慧</span>
      </div>
      <time className="mt-2 font-['DejaVu_Sans_Mono'] text-[10px] leading-4 font-normal text-[#fcfc54]">07:19:46</time>
    </div>
  </section>
);

const StartOrb = () => (
  <svg viewBox="0 0 38 38" className="h-[38px] w-[38px]">
    <defs>
      <radialGradient id="orb" cx="0.5" cy="0.9" r="0.9">
        <stop offset="0" stopColor="#6fd0f0" />
        <stop offset="0.5" stopColor="#1d6aa0" />
        <stop offset="1" stopColor="#3c5a78" />
      </radialGradient>
    </defs>
    <circle cx="19" cy="19" r="17.500" fill="url(#orb)" stroke="#25425f" />
    <path d="M11 11Q15 8 19 10L17.500 17.500Q13.500 15.500 9.500 18Z" fill="#f0622a" />
    <path d="M20.500 11Q25 13 30 10L28 18Q23.500 20 19 18Z" fill="#9ac83a" />
    <path d="M9 19.500Q13 17.500 17 19.500L15.500 26.500Q11.500 24.500 7.500 27Z" fill="#48a8e8" />
    <path d="M18.500 20Q23 22 28 19.500L26 27Q21.500 29.500 17 27.500Z" fill="#fcc932" />
    <ellipse cx="19" cy="8" rx="12" ry="6" fill="#fff" opacity="0.25" />
  </svg>
);

const MediaIcon = () => (
  <svg viewBox="0 0 30 28" className="h-7 w-[30px]">
    <path d="M18 2L26 3V25L18 26Z" fill="#5a9cc4" />
    <path d="M2 2H22V25H2Z" fill="#8cc4e6" stroke="#5f9fc8" />
    <circle cx="12" cy="14" r="9" fill="#f58220" stroke="#fbb26a" />
    <path d="M9 9L17 14L9 19Z" fill="#fff" />
  </svg>
);

const IeIcon = () => (
  <svg viewBox="0 0 34 32" className="h-8 w-[34px]" fill="none">
    <path d="M27 22A11 10.500 0 1 1 28 16.500H11" stroke="#2a8fdc" strokeWidth="5.500" />
    <path d="M27 22A11 10.500 0 1 1 28 16.500H11" stroke="#6cc8f6" strokeWidth="2" />
    <path d="M5 29C-1 24 8 8 22 3C27 1 31 3 30 8" stroke="#fbc02a" strokeWidth="2.500" />
  </svg>
);

const FolderIcon = () => (
  <svg viewBox="0 0 34 30" className="h-[30px] w-[34px]">
    <path d="M1 3H11L13 6H32V28H1Z" fill="#e3bb58" />
    <path d="M5 2H9V6H5Z" fill="#2faa4a" />
    <path d="M12 3H18V6H12ZM20 5H25V8H20Z" fill="#f4f8fc" />
    <path d="M1 9H33V27H1Z" fill="#fbe396" stroke="#d8ad4a" />
    <path d="M6 29V22Q6 19 9 19H25Q28 19 28 22V29H23V23H11V29Z" fill="#7cc6ee" stroke="#4a97c8" />
  </svg>
);

const ReelIcon = () => (
  <svg viewBox="0 0 30 30" className="h-[30px] w-[30px]">
    <circle cx="15" cy="15" r="13" fill="#a6adb4" stroke="#6b737c" />
    <g fill="#20262c">
      <circle cx="15" cy="6" r="3" />
      <circle cx="15" cy="24" r="3" />
      <circle cx="7" cy="10.500" r="3" />
      <circle cx="23" cy="10.500" r="3" />
      <circle cx="7" cy="19.500" r="3" />
      <circle cx="23" cy="19.500" r="3" />
    </g>
    <circle cx="15" cy="15" r="3.500" fill="#fff" stroke="#2ab4e0" strokeWidth="2" />
  </svg>
);

const EyeIcon = () => (
  <svg viewBox="0 0 32 28" className="h-7 w-8">
    <circle cx="13" cy="17" r="11" fill="#4aa6e8" />
    <path d="M9 7Q17 1 21 5Q26 5 31 2Q30 8 23 10Q18 6 9 7Z" fill="#5cb4f0" />
    <circle cx="13" cy="17" r="7" fill="#fff" />
    <circle cx="13" cy="17" r="5" fill="#1a1a1a" />
    <circle cx="15" cy="15" r="1.500" fill="#fff" />
  </svg>
);

const TraderIcon = () => (
  <span className="relative">
    <BrandMark className="h-[30px] w-8" />
    <svg viewBox="0 0 14 16" className="absolute right-0 -bottom-px h-4 w-3.5">
      <path d="M7 0L14 2V8Q13 14 7 16Q1 14 0 8V2Z" fill="#f2f2f2" />
      <path d="M7 1.500V8H1.500V3ZM7 8H12.500Q12 12 7 14.500Z" fill="#2468c8" />
      <path d="M7 1.500L12.500 3V8H7ZM7 8V14.500Q2 12 1.500 8Z" fill="#fbc92c" />
    </svg>
  </span>
);

const JournalIcon = () => (
  <svg viewBox="0 0 30 32" className="h-8 w-[30px]">
    <path d="M3 9H23V30H3Z" fill="#f4f9fd" stroke="#a9c3d8" />
    <circle cx="9" cy="17" r="4" fill="none" stroke="#555c66" strokeWidth="1.500" />
    <circle cx="12" cy="21" r="4" fill="none" stroke="#555c66" strokeWidth="1.500" />
    <path d="M14 22L15 17L23 2L27 4L19 19Z" fill="#4d9de0" stroke="#2a6aa8" strokeWidth="0.600" />
  </svg>
);

const NotepadIcon = () => (
  <svg viewBox="0 0 32 32" className="h-8 w-8">
    <path d="M10 4L30 5L28 30L24 28Z" fill="#f6f6ee" stroke="#a89f72" />
    <path d="M9 4L28 6L22 28L1 24Z" fill="#7cbccb" stroke="#4d93a5" />
    <path d="M10 3V6M13 3V6M16 3V7M19 3V7M22 4V7M25 4V8" stroke="#5c6268" />
  </svg>
);

const SwirlIcon = () => (
  <svg viewBox="0 0 34 34" className="h-[34px] w-[34px]">
    <circle cx="17" cy="17" r="16" fill="#f2581a" />
    <path d="M3 17Q5 6 22 3Q12 9 9 16Z" fill="#fff" />
    <path d="M10 17Q12 7 26 4Q20 12 19 21Q15 17 10 17Z" fill="#fff" />
    <path d="M15 31Q20 26 20 21Q20 12 27 6Q31 16 26 23Q22 29 15 31Z" fill="#fff" />
  </svg>
);

const PaintIcon = () => (
  <svg viewBox="0 0 34 32" className="h-8 w-[34px]">
    <path d="M2 20Q4 8 18 6Q30 6 30 16Q29 27 20 29Q15 29 16 24Q14 21 11 25Q3 28 2 20Z" fill="#b4daf2" stroke="#5c9cc8" />
    <circle cx="8" cy="18" r="2.500" fill="#e03a2f" />
    <circle cx="13" cy="12" r="2.500" fill="#3aa845" />
    <circle cx="20" cy="11" r="2.500" fill="#f6b221" />
    <circle cx="17" cy="19" r="2.500" fill="#3a8ed0" />
    <path d="M17 30L25 9L28 10L20 31Z" fill="#e88a1c" />
    <path d="M24 9Q25 2 33 1Q33 9 28 11Z" fill="#b07a4a" />
  </svg>
);

const PictureIcon = () => (
  <svg viewBox="0 0 32 26" className="h-[26px] w-8">
    <path d="M1 1H10V5H5V9H1ZM31 1H22V5H27V9H31ZM1 25H10V21H5V17H1ZM31 25H22V21H27V17H31Z" fill="#2c7cc0" />
    <path d="M3 4H29V23H3Z" fill="#fff" />
    <path d="M4 5H28V13H4Z" fill="#84c3ee" />
    <path d="M4 7Q10 5 15 8Q20 6 28 9V11H4Z" fill="#e4f3fb" />
    <path d="M4 14Q8 11 15 13Q22 14 28 15V17H4Z" fill="#2f6e46" />
    <path d="M4 16H28V22H4Z" fill="#4f98a8" />
  </svg>
);

const pinned = [
  { name: '媒体播放器', w: 'w-[62px]', icon: <MediaIcon /> },
  { name: 'Internet Explorer', w: 'w-[52px]', icon: <IeIcon />, open: true },
  { name: '资源管理器', w: 'w-[62px]', icon: <FolderIcon /> },
  { name: '视频', w: 'w-[62px]', icon: <ReelIcon /> },
  { name: '看图', w: 'w-[62px]', icon: <EyeIcon /> },
];

const running = [
  { name: '大智慧', icon: <TraderIcon />, active: true },
  { name: '日记本', icon: <JournalIcon /> },
  { name: '记事本', icon: <NotepadIcon /> },
  { name: '行情', icon: <SwirlIcon /> },
  { name: '画图', icon: <PaintIcon /> },
  { name: '照片', icon: <PictureIcon /> },
];

const Taskbar = () => (
  <footer className="flex h-10 shrink-0 items-stretch border-t border-[#cfdcec] bg-[#a6bfdc] pl-2">
    <button aria-label="开始" className="flex w-[51px] items-center">
      <StartOrb />
    </button>
    {pinned.map((app) => (
      <React.Fragment key={app.name}>
        <button
          aria-label={app.name}
          className={`flex shrink-0 items-center justify-center ${app.w} ${
            app.open ? 'rounded-sm border border-[#5f7590] bg-[#d3e0ee]' : ''
          }`}
        >
          {app.icon}
        </button>
        {app.open && <span className="mr-0.5 w-[7px] rounded-r-sm border-x border-[#7c93ae] bg-[#bccde0]" />}
      </React.Fragment>
    ))}
    <div className="flex gap-1 pl-0.5">
      {running.map((app) => (
        <button
          key={app.name}
          aria-label={app.name}
          className={`flex w-[58px] shrink-0 items-center justify-center rounded-sm border border-[#5f7590] ${
            app.active ? 'bg-[#eef3f8]' : 'bg-[#c3d2e4]'
          }`}
        >
          {app.icon}
        </button>
      ))}
    </div>
    <div className="ml-auto flex w-[356px] items-center bg-linear-to-r from-[#a6bfdc] to-[#7489a4] to-10% pl-[38px] text-white">
      <span className="w-[21px] font-['Liberation_Serif'] text-xs">CH</span>
      <Keyboard className="h-4 w-4 text-[#e4e4e4]" />
      <span className="ml-1.5 flex h-4 w-4 items-center justify-center rounded-full border border-[#aab4ff] bg-[#1424a0] text-[11px] leading-3 font-bold">
        ?
      </span>
      <svg viewBox="0 0 9 16" className="ml-2.5 h-4 w-[9px]" fill="none" stroke="#fff">
        <path d="M2.500 0.500H8.500V3.500H2.500ZM0.500 2.500H5.500V5.500H0.500Z" />
        <path d="M2 12H7L4.500 15Z" fill="#fff" stroke="none" />
      </svg>
      <svg viewBox="0 0 9 5" className="ml-2.5 h-[5px] w-[9px]">
        <path d="M0 5L4.500 0L9 5Z" fill="#fff" />
      </svg>
      <svg viewBox="0 0 16 16" className="ml-3 h-4 w-4">
        <circle cx="8" cy="8" r="8" fill="#f8dc1c" />
        <path d="M3 2A8 8 0 0 1 16 8Q11 3 3 2ZM13 14A8 8 0 0 1 0 8Q5 13 13 14Z" fill="#2fae2f" />
        <path d="M6.500 3.500H9.500V6.500H12.500V9.500H9.500V12.500H6.500V9.500H3.500V6.500H6.500Z" fill="#0c6a1c" />
      </svg>
      <svg viewBox="0 0 16 16" className="ml-2 h-4 w-4">
        <path d="M3 1H9V15H2V3H3Z" fill="#4a5562" stroke="#fff" />
        <path d="M8 5H15V9Q14 11 12 11V14H11V11Q9 10 8 9ZM9 1H10V5H9ZM13 1H14V5H13Z" fill="#fff" />
        <path d="M1 8L7 14M7 8L1 14" stroke="#e01818" strokeWidth="2.500" />
      </svg>
      <svg viewBox="0 0 16 16" className="ml-2 h-4 w-4" fill="none" stroke="#fff">
        <path d="M6.500 3.500H15.500V11.500H6.500ZM8 14.500H14M11 12V14" fill="#5c7088" />
        <path d="M1.500 1V5H5.500V1M3.500 5V13.500H6" />
      </svg>
      <Volume2 className="ml-2 h-4 w-4 fill-white" />
      <svg viewBox="0 0 16 16" className="ml-2 h-4 w-4">
        <path d="M1 1V15" stroke="#fff" strokeWidth="1.500" />
        <path d="M2 2H8L12 4V9H8L6 8H2Z" fill="#fff" />
        <circle cx="11" cy="11" r="5" fill="#d8291c" />
        <path d="M9 9L13 13M13 9L9 13" stroke="#fff" strokeWidth="1.500" />
      </svg>
      <div className="flex-1 text-center font-['Open_Sans','Liberation_Sans',sans-serif] text-xs leading-[18px]">
        <div>7:19</div>
        <div>2016/9/16</div>
      </div>
      <button
        aria-label="显示桌面"
        className="w-[14px] self-stretch border border-[#3d4c5e] bg-linear-to-b from-[#8fa2b8] to-[#5d7088]"
      />
    </div>
  </footer>
);

export default function App() {
  return (
    <div className="flex min-h-screen flex-col overflow-hidden bg-black font-['Liberation_Sans','Noto_Sans_CJK_SC',sans-serif]">
      <Header />
      <main className="flex flex-1">
        <div className="flex min-w-0 flex-1 flex-col">
          <Toolbar />
          <div className="flex flex-1">
            <SideTabs />
            <Axis />
            <div className="flex min-w-0 flex-1 flex-col">
              <PriceChart />
              <TurnoverChart />
              <WrChart />
              <DateAxis />
            </div>
          </div>
          <TemplateTabs />
        </div>
        <QuotePanel />
      </main>
      <Ticker />
      <Taskbar />
    </div>
  );
}
